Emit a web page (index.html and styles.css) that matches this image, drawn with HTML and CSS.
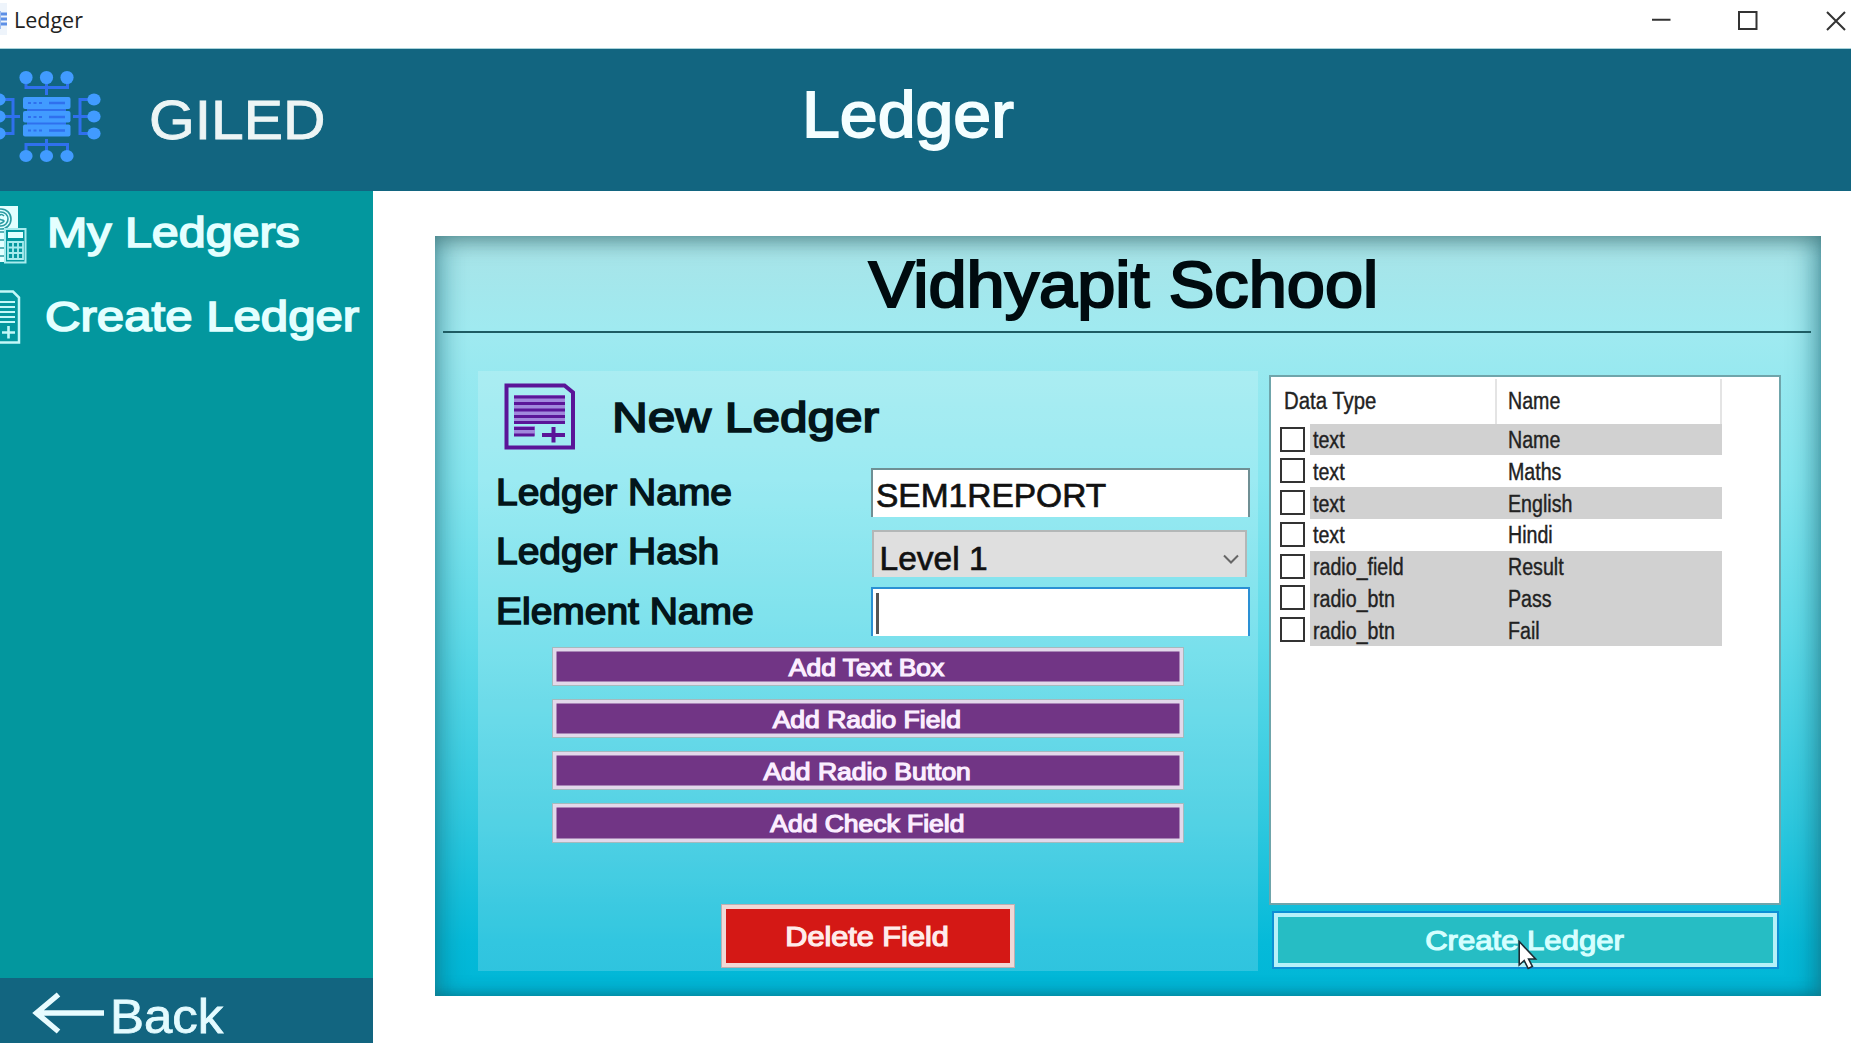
FILE: index.html
```html
<!DOCTYPE html>
<html lang="en">
<head>
<meta charset="utf-8">
<title>Ledger</title>
<link rel="stylesheet" href="styles.css">
</head>
<body>
<div class="titlebar">
  <svg class="app-icon" width="8" height="32" viewBox="0 0 8 32"><rect width="7" height="32" fill="#eef4fb"/><path d="M0 11h7M0 16h7M0 21h7" stroke="#5d8fe6" stroke-width="3"/><path d="M0 8v18" stroke="#9dbcf0" stroke-width="2"/></svg>
  <span class="window-title">Ledger</span>
  <svg class="window-controls" width="200" height="40" viewBox="0 0 200 40" fill="none" stroke="#333" stroke-width="2"><path d="M1 19.700h18.500M88 12h17.500v17H88zM176 12l18 18M194 12l-18 18"/></svg>
</div>
<header class="header">
  <svg class="logo" width="102" height="104" viewBox="0 0 102 104">
    <g fill="none" stroke="#2f70ee" stroke-width="3"><path d="M46.500 18v18M26 18v10.500h41.500V18M46.500 80v16M26 96V85.500h41.500V96M0 57.500h20M73 57.500h21M0 40.500h13v34H0M94 40.500H80v34h14"/></g>
    <path d="M27 50.500h39M27 64.500h39" stroke="#2f70ee" stroke-width="4"/>
    <g fill="#419bff">
      <rect x="23" y="38" width="47.500" height="12" rx="2"/><rect x="23" y="52" width="47.500" height="11.500" rx="2"/><rect x="23" y="65.500" width="47.500" height="12" rx="2"/>
      <circle cx="26" cy="18.500" r="6.600"/><circle cx="46.500" cy="18.500" r="6.600"/><circle cx="67" cy="18.500" r="6.600"/>
      <ellipse cx="26" cy="97" rx="6.600" ry="6"/><ellipse cx="46.500" cy="97" rx="6.600" ry="6"/><ellipse cx="67" cy="97" rx="6.600" ry="6"/>
      <ellipse cx="94" cy="40.500" rx="6.600" ry="6"/><ellipse cx="94" cy="57.500" rx="6.600" ry="6"/><ellipse cx="94" cy="74.500" rx="6.600" ry="6"/>
      <ellipse cx="-1" cy="40.500" rx="6.600" ry="6"/><ellipse cx="-1" cy="57.500" rx="6.600" ry="6"/><ellipse cx="-1" cy="74.500" rx="6.600" ry="6"/>
    </g>
    <path d="M28 44h14M28 58h14M28 71.500h14" stroke="#2f70ee" stroke-width="2" stroke-dasharray="3 2.500"/>
    <path d="M49 44h16M49 58h16M49 71.500h16" stroke="#2f70ee" stroke-width="2.500"/>
  </svg>
  <div class="brand text">GILED</div>
  <div class="page-title text">Ledger</div>
</header>
<div class="body">
  <nav class="sidebar">
    <a class="nav-item nav-item--list">
      <svg class="nav-icon" width="28" height="60" viewBox="0 0 28 60">
        <path fill="#e2ffff" d="M0 1h18v22H5v34H0z"/><g fill="none" stroke="#2a9ba2" stroke-width="1.600"><circle cx="1" cy="14" r="10"/><circle cx="1" cy="14" r="7"/><path d="M4 11q-3-3-5 0t3 4-3 4M0 27h5M0 35h5M0 43h5M0 51h5"/></g>
        <rect x="5" y="24" width="20.500" height="33.500" fill="#03979e" stroke="#a8ecee" stroke-width="2"/><path fill="#e2ffff" d="M8 27h15v6H8z"/><path d="M8 37h15v17H8zM8 42.500h15M8 48h15M13 37v17M18 37v17" fill="none" stroke="#a8ecee" stroke-width="1.800"/>
      </svg>
      <span class="nav-label text">My Ledgers</span>
    </a>
    <a class="nav-item nav-item--create">
      <svg class="nav-icon" width="28" height="60" viewBox="0 0 28 60" fill="none" stroke="#c4f8f8" stroke-width="2"><path d="M0 1.500h13l6 6V52.500H0" stroke-width="2.500"/><path d="M0 12h15M0 17h15M0 22h15M0 27h15M0 32h15"/><path d="M2 42.500h13M8.500 36v12.500" stroke-width="2.600"/></svg>
      <span class="nav-label text">Create Ledger</span>
    </a>
    <a class="back">
      <svg class="back-arrow" width="74" height="44" viewBox="0 0 74 44" fill="none" stroke="#e8fcff" stroke-width="5.500"><path d="M5 22h68M27.500 3.500L5.500 22l22 18.500"/></svg>
      <span class="back-label text">Back</span>
    </a>
  </nav>
  <main class="panel">
    <h1 class="school text">Vidhyapit School</h1>
    <div class="rule"></div>
    <div class="columns">
      <section class="form">
        <div class="form-head">
          <svg class="form-icon" width="72" height="67" viewBox="0 0 72 67" fill="none" stroke="#5a1598"><path d="M2.500 2.500h58l8.500 7v55H2.500z" stroke-width="4"/><path fill="#a088dc" stroke="none" d="M10 12h51v29H10zM10 43h21v10H10z"/><path d="M10 14h51M10 20.500h51M10 27h51M10 33.500h51M10 39.500h51M10 45.500h20.500M10 52h20.500" stroke-width="2.800"/><path d="M38 52h23M49.500 44v15.500" stroke-width="4"/></svg>
          <h2 class="form-title text">New Ledger</h2>
        </div>
        <div class="field"><label class="label text">Ledger Name</label><div class="input"><span class="value text">SEM1REPORT</span></div></div>
        <div class="field"><label class="label text">Ledger Hash</label><div class="select"><span class="value text">Level 1</span><svg width="16" height="11" viewBox="0 0 16 11" fill="none" stroke="#666" stroke-width="2"><path d="M1 1.500l7 7 7-7"/></svg></div></div>
        <div class="field"><label class="label text">Element Name</label><div class="input input--focus"><span class="caret"></span></div></div>
        <div class="actions">
          <div class="btn"><span class="text">Add Text Box</span></div>
          <div class="btn"><span class="text">Add Radio Field</span></div>
          <div class="btn"><span class="text">Add Radio Button</span></div>
          <div class="btn"><span class="text">Add Check Field</span></div>
        </div>
        <div class="btn btn--delete"><span class="text">Delete Field</span></div>
      </section>
      <section class="side">
        <div class="list">
          <div class="list-head"><div class="head-type"><span class="text cell">Data Type</span></div><div class="head-name"><span class="text cell">Name</span></div></div>
          <div class="row row--shaded"><i class="check"></i><div class="cells"><span class="text cell">text</span><span class="text cell">Name</span></div></div>
          <div class="row"><i class="check"></i><div class="cells"><span class="text cell">text</span><span class="text cell">Maths</span></div></div>
          <div class="row row--shaded"><i class="check"></i><div class="cells"><span class="text cell">text</span><span class="text cell">English</span></div></div>
          <div class="row"><i class="check"></i><div class="cells"><span class="text cell">text</span><span class="text cell">Hindi</span></div></div>
          <div class="row row--shaded"><i class="check"></i><div class="cells"><span class="text cell">radio_field</span><span class="text cell">Result</span></div></div>
          <div class="row row--shaded"><i class="check"></i><div class="cells"><span class="text cell">radio_btn</span><span class="text cell">Pass</span></div></div>
          <div class="row row--shaded"><i class="check"></i><div class="cells"><span class="text cell">radio_btn</span><span class="text cell">Fail</span></div></div>
        </div>
        <div class="create"><span class="text">Create Ledger</span>
          <svg class="cursor" width="20" height="30" viewBox="0 0 20 30"><path d="M1.200 1.500v23.500l5-4.500 4 8 4.200-2-3.800-7.500h7z" fill="#fff" stroke="#1d2b33" stroke-width="1.600"/></svg>
        </div>
      </section>
    </div>
  </main>
</div>
</body>
</html>
```
FILE: styles.css
```css
* { box-sizing: border-box; }
body {
  margin: 0;
  width: 1851px;
  height: 1043px;
  overflow: hidden;
  background: #fff;
  font-family: "Liberation Sans", Arial, sans-serif;
  display: flex;
  flex-direction: column;
}
h1, h2 { margin: 0; font-weight: 400; }
svg { display: block; flex: none; }
.text {
  display: block;
  line-height: 1;
  white-space: nowrap;
  transform-origin: left center;
}

.titlebar { height: 49px; flex: none; display: flex; align-items: flex-start; border-bottom: 1px solid #a9d3da; }
.app-icon { margin-top: 3px; }
.window-title { font: 21.500px/26px "Open Sans", "Noto Sans", sans-serif; color: #222; margin: 7px 0 0 6px; }
.window-controls { margin-left: auto; }

.header { height: 142px; flex: none; background: #126580; display: flex; align-items: flex-start; }
.logo { margin-top: 10px; }
.brand { width: 300px; margin: 43px 0 0 47px; font-size: 56px; color: #edf5f5; -webkit-text-stroke: .9px; transform: scaleX(1.05); }
.page-title { margin: 33.500px 0 0 353px; font-size: 64px; color: #f4feff; -webkit-text-stroke: 1.800px; transform: scaleX(1.063); }

.body { flex: 1; display: flex; min-height: 0; }
.sidebar { width: 373px; background: #03979e; display: flex; flex-direction: column; }
.nav-item { display: flex; color: #e4ffff; }
.nav-item--list { padding-top: 14px; height: 98px; }
.nav-item--create { height: 84px; }
.nav-label { font-size: 43px; -webkit-text-stroke: 1.700px; transform: scaleX(1.125); }
.nav-item--list .nav-label { margin: 5.500px 0 0 19px; }
.nav-item--create .nav-label { margin: 5.500px 0 0 16.500px; transform: scaleX(1.143); }
.nav-item--create .nav-icon { margin-top: 1px; }
.back { margin-top: auto; height: 65.500px; background: #126580; display: flex; padding-left: 31px; color: #e4fbff; }
.back-arrow { margin-top: 13px; }
.back-label { font-size: 48.500px; margin: 14.500px 0 0 4.500px; -webkit-text-stroke: .8px; transform: scaleX(1.05); }

.panel {
  width: 1386px;
  height: 760px;
  margin: 45px 0 0 62px;
  display: flex;
  flex-direction: column;
  background: linear-gradient(180deg, #a8e3e7 0%, #a0eaf0 12%, #85e6ef 32%, #60dbe9 52%, #30c9df 76%, #05bad9 93%, #00b6d6 100%);
  box-shadow: inset 0 14px 20px -8px rgba(70, 110, 110, .5), inset 16px 0 24px -8px rgba(15, 100, 115, .45), inset -16px 0 24px -8px rgba(15, 100, 115, .5), inset 0 -7px 12px -5px rgba(10, 100, 120, .4);
}
.school { align-self: center; margin: 15.500px 9px 0 0; font-size: 65px; color: #000b0f; -webkit-text-stroke: 2.200px; transform: scaleX(1.055); transform-origin: center; }
.rule { height: 2.500px; margin: 14px 10px 0 8px; background: #1e5c63; }
.columns { display: flex; gap: 11px; margin: 38px 0 0 43px; }

.form { width: 780px; height: 600px; background: rgba(255, 255, 255, .18); color: #03151a; }
.form-head { height: 97px; display: flex; padding-left: 25.500px; }
.form-icon { margin-top: 12px; }
.form-title { font-size: 43px; margin: 25px 0 0 36px; -webkit-text-stroke: 1.700px; transform: scaleX(1.152); }
.field { height: 59.500px; display: flex; padding-left: 16px; }
.label { width: 375px; margin: 6.500px 0 0 1.500px; font-size: 36px; -webkit-text-stroke: 1.500px; transform: scaleX(1.082); }
.input { width: 379px; height: 49px; background: #fff; border: 2px solid #6f8f94; border-bottom: 0; padding: 8.500px 0 0 3.500px; }
.value { font-size: 33.500px; color: #111; -webkit-text-stroke: .7px; }
.select { width: 375px; height: 47px; margin: 2px 0 0 1.500px; background: #dfdfdf; border: 2px solid #b3b7b7; border-bottom: 0; padding: 10.500px 6px 0 5.500px; display: flex; justify-content: space-between; }
.select svg { margin-top: 12px; }
.input--focus { border-color: #2a90d4; padding: 4px 0 0 3.500px; }
.caret { display: block; width: 3px; height: 41px; background: #555; }
.actions { width: 632px; margin-left: 74px; display: flex; flex-direction: column; gap: 12.700px; }
.btn {
  height: 39.500px;
  border: 1.500px solid #a5b9bd;
  background: #713585;
  box-shadow: inset 0 0 0 3.500px #e2d8ea;
  display: flex;
  justify-content: center;
  align-items: center;
  padding: 4px 2px 0 0;
  color: #fbeeff;
  font-size: 23px;
  -webkit-text-stroke: 1.200px;
}
.btn .text { transform: scaleX(1.15); transform-origin: center; }
.btn--delete { width: 294px; height: 64px; margin: 61px 0 0 243px; background: #d41815; box-shadow: inset 0 0 0 4px #f0d8d6; border-color: #c0aeb0; font-size: 27px; color: #ffeceb; }
.btn--delete .text { transform: scaleX(1.135); }

.side { width: 512px; padding-top: 3.500px; }
.list { height: 530px; border: 2px solid #6fa5ab; background: #fff; color: #222; padding: 2px 57px 0 9px; }
.cell { font-size: 23.500px; transform: scaleX(.835); -webkit-text-stroke: .4px; }
.list-head { height: 45px; display: flex; }
.head-type { width: 217px; border-right: 2px solid #e4e4e4; padding: 11px 0 0 4px; }
.head-type .cell { transform: scaleX(.865); }
.head-name { flex: 1; border-right: 2px solid #e4e4e4; padding: 11px 0 0 11px; }
.row { height: 31.800px; display: flex; }
.check { width: 25px; height: 25px; margin-top: 3px; border: 2px solid #333; background: #fff; }
.cells { flex: 1; margin-left: 5px; padding: 5.500px 0 0 3px; display: grid; grid-template-columns: 195px 1fr; }
.row--shaded .cells { background: #d1d1d1; }
.create {
  position: relative;
  width: 507px;
  height: 58px;
  margin: 6px 0 0 3px;
  border: 2px solid #0d8fd4;
  background: #26bdc4;
  box-shadow: inset 0 0 0 4px #b6f1f8;
  display: flex;
  justify-content: center;
  align-items: center;
  padding-top: 2px;
  color: #d5ffff;
  font-size: 28px;
  -webkit-text-stroke: 1.200px;
}
.create .text { transform: scaleX(1.11); transform-origin: center; margin-right: 1px; }
.cursor { position: absolute; left: 244px; top: 27px; }
```
